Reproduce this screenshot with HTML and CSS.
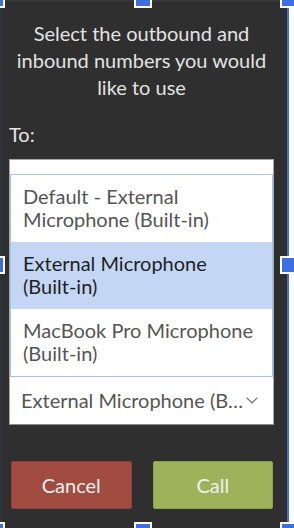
FILE: index.html
```html
<!DOCTYPE html>
<html lang="en">
<head>
<meta charset="utf-8">
<title>Select numbers</title>
<link rel="stylesheet" href="styles.css">
</head>
<body>
<div class="frame">
  <p class="title">Select the outbound and inbound numbers you would like to use</p>
  <div class="label">To:</div>
  <div class="field">
    <div class="listbox">
      <div class="item">Default - External Microphone (Built-in)</div>
      <div class="item item-selected">External Microphone (Built-in)</div>
      <div class="item">MacBook Pro Microphone (Built-in)</div>
    </div>
    <div class="current">
      <span class="current-text">External Microphone (Built-in)</span>
      <svg class="chevron" width="12" height="7" viewBox="0 0 12 7"><polyline points="0.6,0.6 6,6 11.4,0.6" fill="none" stroke="#666" stroke-width="1.2"/></svg>
    </div>
  </div>
  <div class="actions">
    <button class="btn btn-cancel">Cancel</button>
    <button class="btn btn-call">Call</button>
  </div>
  <span class="handle h-tl"></span>
  <span class="handle h-tm"></span>
  <span class="handle h-tr"></span>
  <span class="handle h-ml"></span>
  <span class="handle h-mr"></span>
  <span class="handle h-bl"></span>
  <span class="handle h-bm"></span>
  <span class="handle h-br"></span>
</div>
</body>
</html>
```
FILE: styles.css
```css
html, body {
  margin: 0;
  height: 100%;
  overflow: hidden;
  background: #ffffff;
}
.frame {
  position: relative;
  box-sizing: border-box;
  width: 289px;
  height: 528px;
  background: #2f2f2f;
  border-left: 1px solid #27324a;
  border-right: 2px solid #3e6fdf;
  border-top: 1px solid #3a3a3a;
  padding: 19px 13px 0 8px;
  font-family: Lato, "Open Sans", sans-serif;
  font-size: 20px;
  line-height: 27px;
}
.title {
  margin: 0;
  text-align: center;
  color: #e2e2e2;
}
.label {
  margin-top: 20px;
  color: #e6e6e6;
}
.field {
  margin-top: 11px;
  background: #ffffff;
  border: 1px solid #a8a8a8;
  border-bottom-color: #8a8a8a;
  padding-top: 14px;
}
.listbox {
  border: 1px solid #a4c2f2;
}
.item {
  padding: 10px 12px 11px 12px;
  line-height: 23px;
  color: #555555;
}
.item-selected {
  background: #c3d7f5;
  color: #1f1f1f;
}
.current {
  display: flex;
  align-items: center;
  height: 47px;
  padding-left: 11px;
  padding-right: 15px;
  color: #555555;
}
.current-text {
  flex: 1 1 auto;
  min-width: 0;
  overflow: hidden;
  white-space: nowrap;
  text-overflow: ellipsis;
}
.chevron {
  flex: none;
  margin-left: 1px;
  margin-top: -1px;
}
.actions {
  display: grid;
  grid-template-columns: 1fr 1fr;
  gap: 21px;
  margin: 36px 1px 0 2px;
}
.btn {
  height: 48px;
  border-radius: 2px;
  font-family: Lato, "Open Sans", sans-serif;
  font-size: 20px;
  color: #f0f0f0;
  padding: 0;
}
.btn-cancel {
  background: #a24b41;
  border: 1px solid #8f3f36;
}
.btn-call {
  background: #9db35a;
  border: 1px solid #8ba04a;
}
.handle {
  position: absolute;
  width: 14px;
  height: 14px;
  background: #3e6fe0;
  border: 2px solid #ffffff;
}
.h-tl { left: -14px; top: -11px; }
.h-tm { left: 133px; top: -11px; }
.h-tr { left: 279px; top: -11px; }
.h-ml { left: -14px; top: 255px; }
.h-mr { left: 279px; top: 255px; }
.h-bl { left: -14px; top: 521px; }
.h-bm { left: 133px; top: 521px; }
.h-br { left: 279px; top: 521px; }
```
